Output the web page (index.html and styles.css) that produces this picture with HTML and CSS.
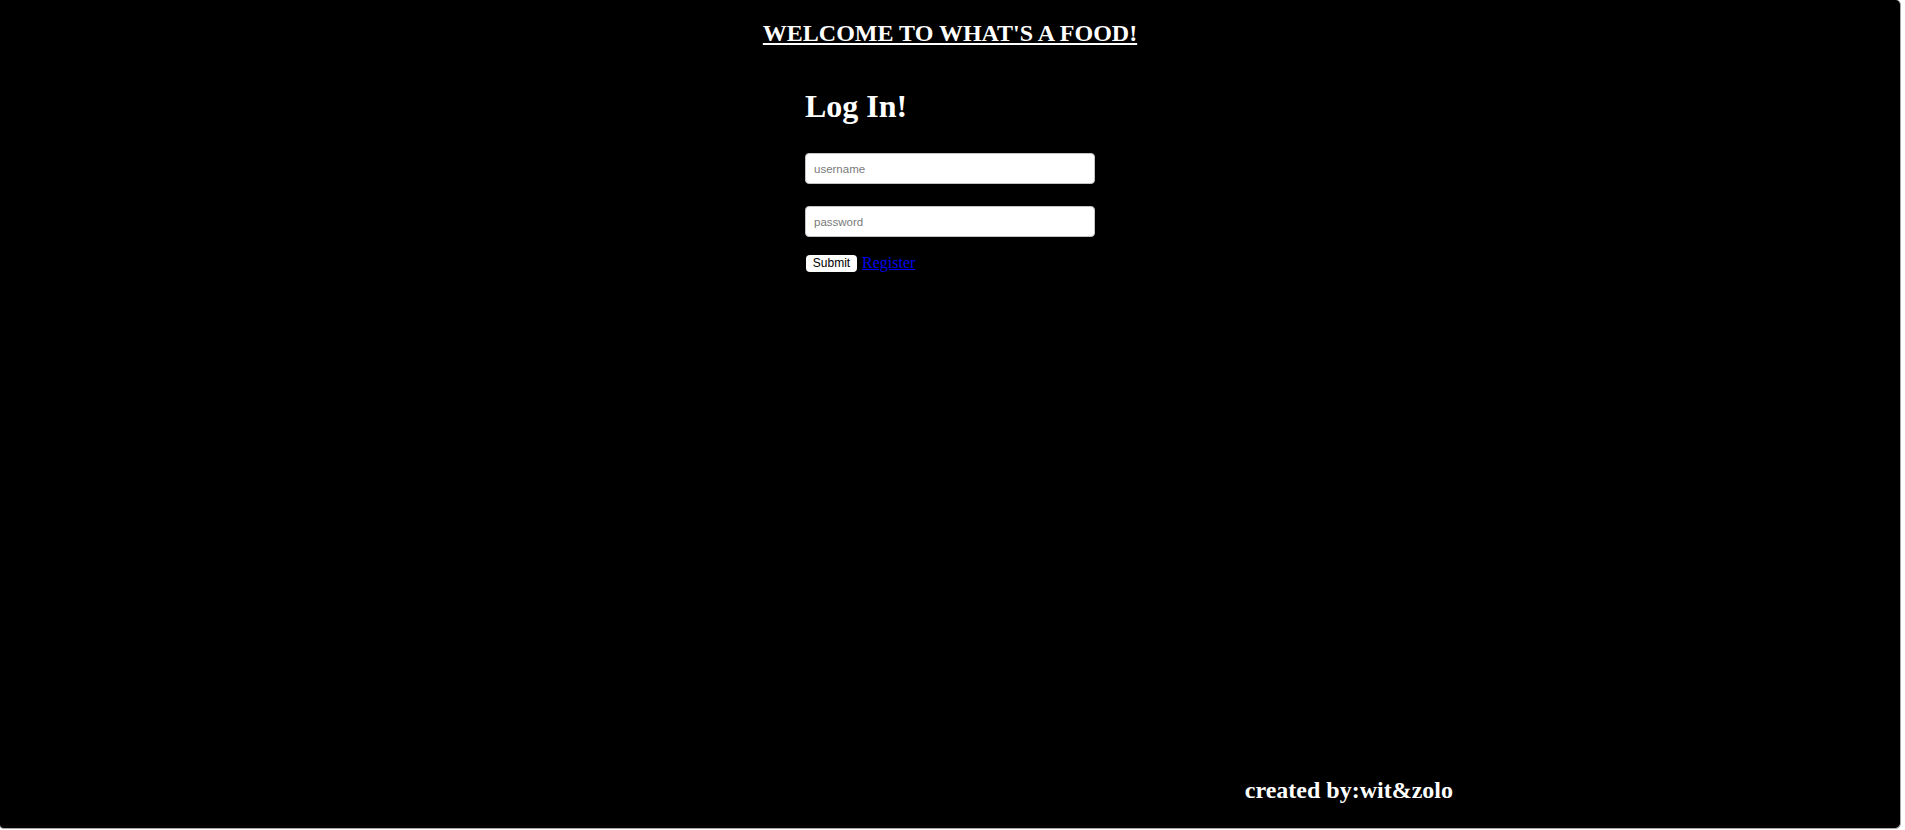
FILE: index.html
```html
<!DOCTYPE html>
<html lang="en">
<head>
<meta charset="utf-8">
<title>What's a Food</title>
<link rel="stylesheet" href="styles.css">
</head>
<body>
<div class="window">
  <header class="site-header">
    <h2 class="site-title">WELCOME TO WHAT'S A FOOD!</h2>
  </header>
  <main class="main">
    <form class="login-form">
      <h1 class="login-title">Log In!</h1>
      <input class="field" type="text" placeholder="username">
      <input class="field field-second" type="password" placeholder="password">
      <div class="actions">
        <button class="submit-btn" type="button">Submit</button>
        <a class="register-link" href="#">Register</a>
      </div>
    </form>
  </main>
  <footer class="site-footer">
    <h2 class="credits">created by:wit&amp;zolo</h2>
  </footer>
</div>
</body>
</html>
```

FILE: styles.css
```css
html {
  background: #ffffff;
}

body {
  margin: 0;
  font-family: "Liberation Serif", "Times New Roman", serif;
}

.window {
  box-sizing: border-box;
  width: 1901px;
  height: 829px;
  background: #000000;
  border-right: 1px solid #a8a8a8;
  border-bottom: 1px solid #a8a8a8;
  border-radius: 0 5px 6px 4px;
  display: flex;
  flex-direction: column;
  color: #ffffff;
}

.site-header {
  padding-top: 19px;
}

.site-title {
  margin: 0;
  font-size: 24px;
  line-height: 28px;
  font-weight: bold;
  text-align: center;
  text-decoration: underline;
  color: #ffffff;
}

.main {
  flex: 1;
}

.login-form {
  width: 290px;
  margin: 0 auto;
  display: flex;
  flex-direction: column;
  align-items: flex-start;
}

.login-title {
  margin: 41px 0 28px;
  font-size: 32px;
  line-height: 37px;
  font-weight: bold;
}

.field {
  box-sizing: border-box;
  width: 290px;
  height: 31px;
  margin: 0;
  padding: 0 8px;
  border: 1px solid #c4c4c4;
  border-radius: 4px;
  background: #ffffff;
  font-family: "Liberation Sans", Arial, sans-serif;
  font-size: 11.5px;
  color: #000;
  outline: none;
}

.field::placeholder {
  color: #7a7a7a;
}

.field-second {
  margin-top: 22px;
}

.actions {
  margin-top: 17px;
  display: flex;
  align-items: center;
  gap: 5px;
  padding-left: 1px;
}

.submit-btn {
  box-sizing: border-box;
  width: 51px;
  height: 17px;
  padding: 0;
  border: none;
  border-radius: 4px;
  background: #ffffff;
  color: #000000;
  font-family: "Liberation Sans", Arial, sans-serif;
  font-size: 12px;
  line-height: 17px;
}

.register-link {
  font-size: 16px;
  line-height: 18px;
  color: #0000ee;
  text-decoration: underline;
}

.site-footer {
  display: flex;
  justify-content: flex-end;
  padding: 0 447px 24px 0;
}

.credits {
  margin: 0;
  font-size: 24px;
  line-height: 28px;
  font-weight: bold;
}
```
